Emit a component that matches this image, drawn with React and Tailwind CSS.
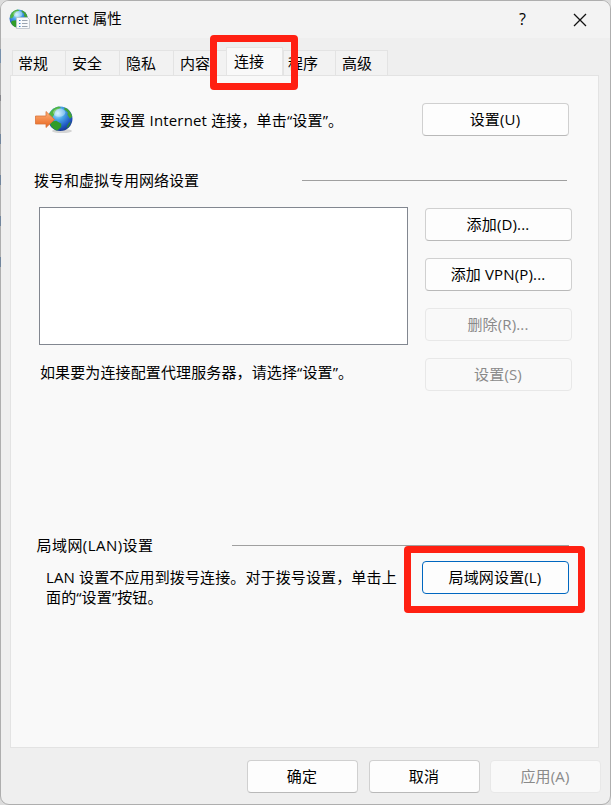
import React from "react";

const tabs = ["常规", "安全", "隐私", "内容", "连接", "程序", "高级"];
const tabWidths = ["w-[53px]", "w-[54px]", "w-[54px]", "w-[53px]", "w-[57px]", "w-[52px]", "w-[53px]"];

const buttonStyles = {
  normal: "border-[#d0d0d0] border-b-[#b9b9b9] bg-[#fdfdfd] text-black",
  focused: "border-[#0067c0] bg-[#fdfdfd] text-black",
  disabled: "border-[#e8e8e8] bg-[#f9f9f9] text-[#8a8a8a]",
};

function Button({ children, kind = "normal", width = "w-[147px]" }) {
  return (
    <button className={`flex h-[33px] shrink-0 items-center justify-center rounded-[4px] border pr-px pb-0.5 leading-5 tracking-[0.15px] ${width} ${buttonStyles[kind]}`}>
      {children}
    </button>
  );
}

function Globe({ id }) {
  return (
    <>
      <defs>
        <radialGradient id={id} cx="40%" cy="28%" r="75%">
          <stop offset="0" stopColor="#c4f0ff" />
          <stop offset=".35" stopColor="#4aa6e8" />
          <stop offset=".75" stopColor="#2058c4" />
          <stop offset="1" stopColor="#17378c" />
        </radialGradient>
      </defs>
      <circle cx="12" cy="12" r="12" fill={`url(#${id})`} />
      <path d="M1 8C3 3 7 .5 11 0L13 1.500 9 3 7 5 6 8 4 11 1 12Z" fill="#4fb543" />
      <path d="M16 1C20 2 23 6 23.700 10L21.500 12 19 8 19.500 6 16 3Z" fill="#43a236" />
      <path d="M3 15L8 14 13 17 13 20 9 23.600C6 23 3 20 2 17Z" fill="#319c28" />
      <path d="M20.500 16L22.500 15 20 20 18 21Z" fill="#2c8a2e" />
      <ellipse cx="11" cy="6" rx="6" ry="4" fill="#fff" opacity=".35" />
    </>
  );
}

function TitleIcon() {
  return (
    <svg width="22" height="21" viewBox="0 0 22 21">
      <g transform="translate(.5 .5) scale(.76)"><Globe id="title-globe" /></g>
      <path d="M7.500 8.500H18.500L20.500 10.500V19.500H7.500Z" fill="#f8fafc" stroke="#b9c0c8" strokeWidth=".8" />
      <path d="M10 11.500H11.500M10 14.500H11.500M10 17.500H11.500" stroke="#3c7fc9" strokeWidth="1.200" />
      <path d="M13 11.500H18.500M13 14.500H18.500M13 17.500H18.500" stroke="#9aa4b0" />
    </svg>
  );
}

function ConnectIcon() {
  return (
    <svg width="39" height="28" viewBox="0 0 39 28">
      <defs>
        <linearGradient id="arrow" x1="0" y1="0" x2="0" y2="1">
          <stop offset="0" stopColor="#ffb27c" />
          <stop offset="1" stopColor="#e8641b" />
        </linearGradient>
      </defs>
      <ellipse cx="27" cy="25" rx="10" ry="2" fill="#000" opacity=".15" />
      <g transform="translate(13 .5) scale(1.02)"><Globe id="connect-globe" /></g>
      <path d="M.5 10H11V5.500L19.500 13.500 11 21.500V18H.5Z" fill="url(#arrow)" stroke="#d9743a" strokeWidth=".8" />
    </svg>
  );
}

const slivers = (
  <div className="absolute top-[49px] left-0 flex w-px flex-col">
    <i className="h-3.5 bg-[#7790ab]" />
    <i className="mt-8 h-1.5 bg-[#85858a]" />
    <i className="mt-[33px] h-2.5 bg-[#71859c]" />
    <i className="mt-[31px] h-2.5 bg-[#71859c]" />
    <i className="mt-[31px] h-2.5 bg-[#71859c]" />
    <i className="mt-[31px] h-2.5 bg-[#71859c]" />
  </div>
);

export default function App() {
  return (
    <div className="h-[805px] w-[611px] overflow-hidden bg-[#dcdcdc] font-['Open_Sans','Noto_Sans_CJK_SC',sans-serif] text-[15px] leading-5 text-black">
      <div className="relative flex h-full flex-col overflow-hidden rounded-[9px] border border-[#aeaeae] bg-[#efefef]">
        <header className="flex h-[37px] shrink-0 items-center bg-[#f3f3f3] pl-2">
          <TitleIcon />
          <h1 className="ml-1 flex-1 pb-0.5 text-[14.500px] tracking-[-0.05px]">Internet 属性</h1>
          <span className="w-[17px] pb-0.5 text-center text-base">?</span>
          <svg className="mr-[23px] ml-[42px]" width="14" height="14" viewBox="0 0 14 14">
            <path d="M1 1L13 13M13 1L1 13" stroke="#111" strokeWidth="1.300" />
          </svg>
        </header>

        <nav className="mt-[9px] flex h-7 shrink-0 items-end pl-[11px]">
          {tabs.map((tab, i) =>
            i === 4 ? (
              <div key={tab} className={`z-10 h-7 border border-b-0 border-[#e5e5e5] bg-[#f9f9f9] pt-[3px] pl-[7px] ${tabWidths[i]}`}>{tab}</div>
            ) : (
              <div key={tab} className={`h-[25px] border-t border-l border-[#e3e3e3] bg-[#f2f2f2] pt-[2px] ${i === 6 ? "border-r" : ""} ${i === 5 ? "pl-1" : i === 0 ? "pl-[5px]" : "pl-1.5"} ${tabWidths[i]}`}>{tab}</div>
            )
          )}
        </nav>

        <main className="ml-[9px] flex h-[673px] w-[589px] shrink-0 flex-col border border-[#e3e3e3] bg-[#f9f9f9]">
          <section className="mt-[27px] flex h-[33px] items-center pl-6">
            <ConnectIcon />
            <p className="ml-[26px] w-[322px] tracking-[0.16px]">要设置 Internet 连接，单击“设置”。</p>
            <Button>设置(U)</Button>
          </section>

          <div className="mt-[34px] flex h-5 items-center pl-[23px]">
            <h2 className="w-[268px]">拨号和虚拟专用网络设置</h2>
            <hr className="w-[265px] border-[#a0a0a0]" />
          </div>

          <section className="mt-[17px] flex h-[184px] pl-7">
            <div className="w-[386px]">
              <div className="h-[138px] w-[369px] border border-[#828790] bg-white" />
              <p className="mt-[17px] pl-px tracking-[0.12px]">如果要为连接配置代理服务器，请选择“设置”。</p>
            </div>
            <div className="flex flex-col gap-[17px] pt-px">
              <Button>添加(D)...</Button>
              <Button>添加 VPN(P)...</Button>
              <Button kind="disabled">删除(R)...</Button>
              <Button kind="disabled">设置(S)</Button>
            </div>
          </section>

          <div className="mt-[144px] flex h-5 items-center pl-[25.500px]">
            <h2 className="w-[195.500px] tracking-[0.45px]">局域网(LAN)设置</h2>
            <hr className="w-[337px] border-[#a0a0a0]" />
          </div>
          <section className="mt-1.5 flex items-start pl-[35px]">
            <p className="mt-1.5 w-[376px] tracking-[0.13px] whitespace-nowrap">
              LAN 设置不应用到拨号连接。对于拨号设置，单击上<br />面的“设置”按钮。
            </p>
            <Button kind="focused">局域网设置(L)</Button>
          </section>
        </main>

        <footer className="mt-3 flex pl-[246px]">
          <Button width="w-[111px] mr-[11px]">确定</Button>
          <Button width="w-[111px] mr-2.5">取消</Button>
          <Button kind="disabled" width="w-[111px]">应用(A)</Button>
        </footer>
      </div>

      {slivers}
      <div className="absolute top-[35px] left-[210px] z-20 h-[55px] w-[88px] rounded-[4px] border-7 border-[#ff2012]" />
      <div className="absolute top-[546px] left-[404px] z-20 h-[67px] w-[181px] rounded-[4px] border-7 border-[#ff2012]" />
    </div>
  );
}
